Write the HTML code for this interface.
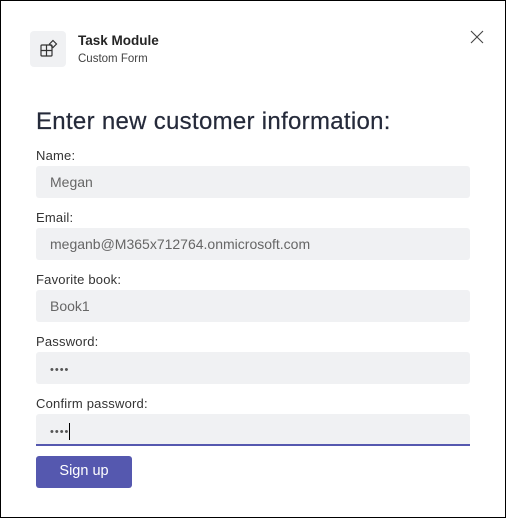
<!DOCTYPE html>
<html><head><meta charset="utf-8"><style>
html,body{margin:0;padding:0;background:#fff;}
body{width:506px;height:518px;position:relative;overflow:hidden;font-family:"Liberation Sans",sans-serif;}
.frame{position:absolute;left:0;top:0;width:504px;height:516px;border:1px solid #000;}
.ib{position:absolute;left:30px;top:31px;width:36px;height:36px;background:#f0f1f3;border-radius:4px;}
.t1{position:absolute;left:78px;top:33px;font-size:13.5px;font-weight:bold;color:#242424;}
.t2{position:absolute;left:78px;top:53px;font-size:11.5px;color:#424242;}
.h{position:absolute;left:36px;top:108px;font-size:24px;color:#252a3a;letter-spacing:0.3px;-webkit-text-stroke:0.2px #252a3a;}
.l{position:absolute;left:36px;font-size:13px;color:#333;letter-spacing:0.2px;}
.in{position:absolute;left:36px;width:434px;height:32px;background:#f0f1f3;border-radius:3px;font-size:14px;color:#666;line-height:32px;text-indent:14px;box-sizing:border-box;}
.btn{position:absolute;left:36px;top:456px;width:96px;height:32px;background:#5558af;border-radius:3px;color:#fff;font-size:14.5px;text-align:center;line-height:31px;}
.dots{letter-spacing:1px;font-size:11px;color:#555;}
</style></head><body>
<div class="frame"></div>
<div class="ib"><svg width="36" height="36" viewBox="0 0 36 36" fill="none" stroke="#333" stroke-width="1.2"><rect x="11" y="14" width="11" height="11" rx="1"/><path d="M11 19.5h11M16.5 14v11"/><path d="M23 9.5l3.5 3.5-3.5 3.5-3.5-3.5z"/></svg></div>
<div class="t1">Task Module</div>
<div class="t2">Custom Form</div>
<svg style="position:absolute;left:470px;top:30px" width="14" height="14" viewBox="0 0 14 14" stroke="#444" stroke-width="1.1"><path d="M1 1l12 12M13 1L1 13"/></svg>
<div class="h">Enter new customer information:</div>
<div class="l" style="top:148px">Name:</div>
<div class="in" style="top:166px">Megan</div>
<div class="l" style="top:210px">Email:</div>
<div class="in" style="top:228px">meganb@M365x712764.onmicrosoft.com</div>
<div class="l" style="top:272px">Favorite book:</div>
<div class="in" style="top:290px">Book1</div>
<div class="l" style="top:334px">Password:</div>
<div class="in" style="top:352px"><span class="dots">••••</span></div>
<div class="l" style="top:396px">Confirm password:</div>
<div class="in" style="top:414px;border-bottom:2px solid #5558af;border-radius:3px 3px 0 0"><span class="dots">••••</span><span style="display:inline-block;width:1px;height:17px;background:#000;vertical-align:middle;margin-left:0px"></span></div>
<div class="btn">Sign up</div>
</body></html>
